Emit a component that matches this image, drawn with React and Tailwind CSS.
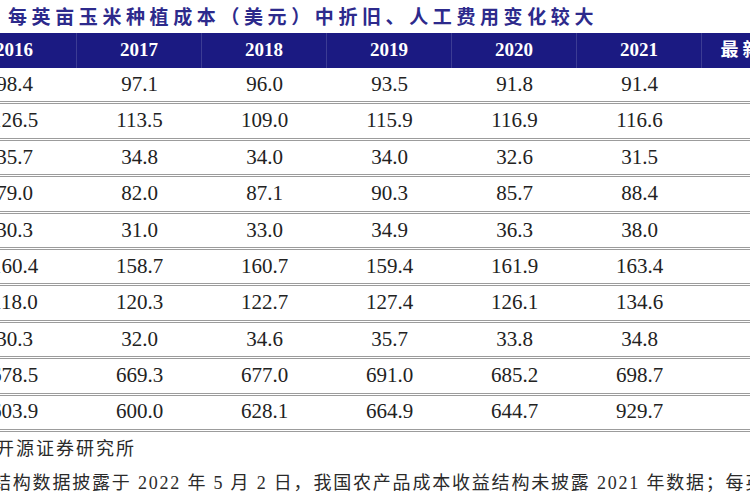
const years = ['2016', '2017', '2018', '2019', '2020', '2021'];

const rows = [
  ['98.4', '97.1', '96.0', '93.5', '91.8', '91.4', ''],
  ['126.5', '113.5', '109.0', '115.9', '116.9', '116.6', ''],
  ['35.7', '34.8', '34.0', '34.0', '32.6', '31.5', ''],
  ['79.0', '82.0', '87.1', '90.3', '85.7', '88.4', ''],
  ['30.3', '31.0', '33.0', '34.9', '36.3', '38.0', ''],
  ['160.4', '158.7', '160.7', '159.4', '161.9', '163.4', ''],
  ['118.0', '120.3', '122.7', '127.4', '126.1', '134.6', ''],
  ['30.3', '32.0', '34.6', '35.7', '33.8', '34.8', ''],
  ['678.5', '669.3', '677.0', '691.0', '685.2', '698.7', ''],
  ['603.9', '600.0', '628.1', '664.9', '644.7', '929.7', ''],
];

const serif = "font-['Liberation_Serif','Noto_Sans_CJK_SC',serif]";

export default function App() {
  return (
    <div className="w-[750px] h-[500px] overflow-hidden bg-white">
      {/* Title */}
      <div className="h-[33px] flex items-center pl-[8px] whitespace-nowrap">
        <span className="font-['Noto_Sans_CJK_SC',sans-serif] font-bold text-[19px] tracking-[4.6px] text-[#2d2a8c]">
          每英亩玉米种植成本（美元）中折旧、人工费用变化较大
        </span>
      </div>

      {/* Table: the first label column lies off the left edge */}
      <div className="ml-[-48px] w-[875px]">
        <div className="flex h-[35px] bg-[#1b1a82]">
          {years.map((y) => (
            <div key={y}
              className={`w-[125px] shrink-0 flex items-center justify-center text-white font-bold text-[19px] border-r border-white/15 ${serif}`}>
              {y}
            </div>
          ))}
          <div className={`w-[125px] shrink-0 flex items-center justify-center whitespace-nowrap text-white font-bold text-[18px] tracking-[4px] ${serif}`}>
            最新变化
          </div>
        </div>
        {rows.map((r, ri) => (
          <div key={ri} className="flex h-[36.4px] border-b-[3px] border-double border-[#9c9c9c]">
            {r.map((v, ci) => (
              <div key={ci}
                className={`w-[125px] shrink-0 flex items-center justify-center text-[21px] text-[#222] ${serif}`}>
                {v}
              </div>
            ))}
          </div>
        ))}
      </div>

      {/* Notes */}
      <div className={`h-[36px] flex items-center ml-[-4px] whitespace-nowrap text-[18px] tracking-[2px] text-[#2a2a2a] ${serif}`}>
        开源证券研究所
      </div>
      <div className={`h-[32px] flex items-center ml-[-7px] whitespace-nowrap text-[18px] tracking-[1.8px] text-[#2a2a2a] ${serif}`}>
        结构数据披露于 2022 年 5 月 2 日，我国农产品成本收益结构未披露 2021 年数据；每英亩
      </div>
    </div>
  );
}
